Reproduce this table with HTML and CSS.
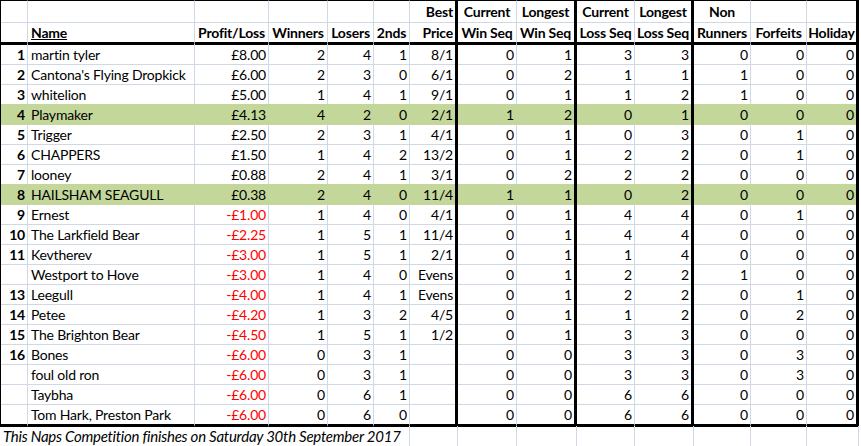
FILE: index.html
```html
<!DOCTYPE html>
<html>
<head>
<meta charset="utf-8">
<link rel="stylesheet" href="styles.css">
</head>
<body>
<div class="sheet">
  <div class="row head1">
    <div></div><div></div><div></div><div></div><div></div><div></div>
    <div class="r">Best</div><div class="c">Current</div><div class="c">Longest</div><div class="c">Current</div><div class="c">Longest</div><div class="c">Non</div><div></div><div></div>
  </div>
  <div class="row head2">
    <div></div><div class="l"><u>Name</u></div><div class="c">Profit/Loss</div><div class="c">Winners</div><div class="c">Losers</div><div class="c">2nds</div>
    <div class="r">Price</div><div class="c">Win Seq</div><div class="c">Win Seq</div><div class="c">Loss Seq</div><div class="c">Loss Seq</div><div class="c">Runners</div><div class="c">Forfeits</div><div class="c">Holiday</div>
  </div>

  <div class="row"><div class="rk">1</div><div class="nm">martin tyler</div><div>£8.00</div><div>2</div><div>4</div><div>1</div><div>8/1</div><div>0</div><div>1</div><div>3</div><div>3</div><div>0</div><div>0</div><div>0</div></div>
  <div class="row"><div class="rk">2</div><div class="nm">Cantona's Flying Dropkick</div><div>£6.00</div><div>2</div><div>3</div><div>0</div><div>6/1</div><div>0</div><div>2</div><div>1</div><div>1</div><div>1</div><div>0</div><div>0</div></div>
  <div class="row pre"><div class="rk">3</div><div class="nm">whitelion</div><div>£5.00</div><div>1</div><div>4</div><div>1</div><div>9/1</div><div>0</div><div>1</div><div>1</div><div>2</div><div>1</div><div>0</div><div>0</div></div>
  <div class="row green"><div class="rk">4</div><div class="nm">Playmaker</div><div>£4.13</div><div>4</div><div>2</div><div>0</div><div>2/1</div><div>1</div><div>2</div><div>0</div><div>1</div><div>0</div><div>0</div><div>0</div></div>
  <div class="row"><div class="rk">5</div><div class="nm">Trigger</div><div>£2.50</div><div>2</div><div>3</div><div>1</div><div>4/1</div><div>0</div><div>1</div><div>0</div><div>3</div><div>0</div><div>1</div><div>0</div></div>
  <div class="row"><div class="rk">6</div><div class="nm">CHAPPERS</div><div>£1.50</div><div>1</div><div>4</div><div>2</div><div>13/2</div><div>0</div><div>1</div><div>2</div><div>2</div><div>0</div><div>1</div><div>0</div></div>
  <div class="row pre"><div class="rk">7</div><div class="nm">looney</div><div>£0.88</div><div>2</div><div>4</div><div>1</div><div>3/1</div><div>0</div><div>2</div><div>2</div><div>2</div><div>0</div><div>0</div><div>0</div></div>
  <div class="row green"><div class="rk">8</div><div class="nm">HAILSHAM SEAGULL</div><div>£0.38</div><div>2</div><div>4</div><div>0</div><div>11/4</div><div>1</div><div>1</div><div>0</div><div>2</div><div>0</div><div>0</div><div>0</div></div>
  <div class="row"><div class="rk">9</div><div class="nm">Ernest</div><div class="neg">-£1.00</div><div>1</div><div>4</div><div>0</div><div>4/1</div><div>0</div><div>1</div><div>4</div><div>4</div><div>0</div><div>1</div><div>0</div></div>
  <div class="row"><div class="rk">10</div><div class="nm">The Larkfield Bear</div><div class="neg">-£2.25</div><div>1</div><div>5</div><div>1</div><div>11/4</div><div>0</div><div>1</div><div>4</div><div>4</div><div>0</div><div>0</div><div>0</div></div>
  <div class="row"><div class="rk">11</div><div class="nm">Kevtherev</div><div class="neg">-£3.00</div><div>1</div><div>5</div><div>1</div><div>2/1</div><div>0</div><div>1</div><div>1</div><div>4</div><div>0</div><div>0</div><div>0</div></div>
  <div class="row"><div class="rk"></div><div class="nm">Westport to Hove</div><div class="neg">-£3.00</div><div>1</div><div>4</div><div>0</div><div>Evens</div><div>0</div><div>1</div><div>2</div><div>2</div><div>1</div><div>0</div><div>0</div></div>
  <div class="row"><div class="rk">13</div><div class="nm">Leegull</div><div class="neg">-£4.00</div><div>1</div><div>4</div><div>1</div><div>Evens</div><div>0</div><div>1</div><div>2</div><div>2</div><div>0</div><div>1</div><div>0</div></div>
  <div class="row"><div class="rk">14</div><div class="nm">Petee</div><div class="neg">-£4.20</div><div>1</div><div>3</div><div>2</div><div>4/5</div><div>0</div><div>1</div><div>1</div><div>2</div><div>0</div><div>2</div><div>0</div></div>
  <div class="row"><div class="rk">15</div><div class="nm">The Brighton Bear</div><div class="neg">-£4.50</div><div>1</div><div>5</div><div>1</div><div>1/2</div><div>0</div><div>1</div><div>3</div><div>3</div><div>0</div><div>0</div><div>0</div></div>
  <div class="row"><div class="rk">16</div><div class="nm">Bones</div><div class="neg">-£6.00</div><div>0</div><div>3</div><div>1</div><div></div><div>0</div><div>0</div><div>3</div><div>3</div><div>0</div><div>3</div><div>0</div></div>
  <div class="row"><div class="rk"></div><div class="nm">foul old ron</div><div class="neg">-£6.00</div><div>0</div><div>3</div><div>1</div><div></div><div>0</div><div>0</div><div>3</div><div>3</div><div>0</div><div>3</div><div>0</div></div>
  <div class="row"><div class="rk"></div><div class="nm">Taybha</div><div class="neg">-£6.00</div><div>0</div><div>6</div><div>1</div><div></div><div>0</div><div>0</div><div>6</div><div>6</div><div>0</div><div>0</div><div>0</div></div>
  <div class="row last"><div class="rk"></div><div class="nm">Tom Hark, Preston Park</div><div class="neg">-£6.00</div><div>0</div><div>6</div><div>0</div><div></div><div>0</div><div>0</div><div>6</div><div>6</div><div>0</div><div>0</div><div>0</div></div>

  <div class="foot">
    <div class="note">This Naps Competition finishes on Saturday 30th September 2017</div>
    <div></div><div></div><div></div><div></div><div></div><div></div><div></div><div></div>
  </div>
</div>
</body>
</html>
```

FILE: styles.css
```css
html, body {
  margin: 0;
  padding: 0;
  background: #fff;
}

body {
  font-family: Lato, "Liberation Sans", sans-serif;
  font-size: 14px;
  letter-spacing: -0.2px;
  color: #000;
}

.sheet {
  width: 861px;
}

.row,
.foot {
  display: grid;
  grid-template-columns: 28px 167px 74px 59px 46px 36px 48px 59px 60px 58px 59px 57px 56px 52px;
  height: 20px;
}

.row > div,
.foot > div {
  box-sizing: border-box;
  border-right: 1px solid #d0d7e5;
  border-bottom: 1px solid #d0d7e5;
  padding: 1px 2px 0 3px;
  line-height: 19px;
  white-space: nowrap;
  overflow: visible;
  text-align: right;
}

.row > div:first-child {
  border-left: 1px solid #000;
}

.row > div:nth-child(7),
.row > div:nth-child(9),
.row > div:nth-child(11),
.row > div:nth-child(14) {
  border-right: 3px solid #000;
}

.head1 {
  height: 22px;
}

.head1 > div {
  border-top: 1px solid #000;
  font-weight: bold;
  line-height: 20px;
}

.head2 {
  height: 22px;
}

.head2 > div {
  border-bottom: 3px solid #000;
  font-weight: bold;
  line-height: 19px;
}

.last {
  height: 22px;
}

.last > div {
  border-bottom: 3px solid #000;
}

.c {
  text-align: center !important;
  padding-left: 0 !important;
  padding-right: 0 !important;
}

.l,
.nm {
  text-align: left !important;
}

.rk {
  font-weight: bold;
  padding-right: 2px !important;
  padding-left: 0 !important;
}

.neg {
  color: #ff0000;
}

.green > div {
  background: #c4d79b;
  border-bottom-color: #c4d79b;
}

.green > div:nth-child(-n+6),
.green > div:nth-child(8),
.green > div:nth-child(10),
.green > div:nth-child(12),
.green > div:nth-child(13) {
  border-right-color: #c4d79b;
}

.pre > div {
  border-bottom-color: #c4d79b;
}

.foot > .note {
  grid-column: span 6;
  text-align: left;
  font-style: italic;
  font-size: 15px;
  letter-spacing: -0.25px;
  padding-left: 3px;
}
```
